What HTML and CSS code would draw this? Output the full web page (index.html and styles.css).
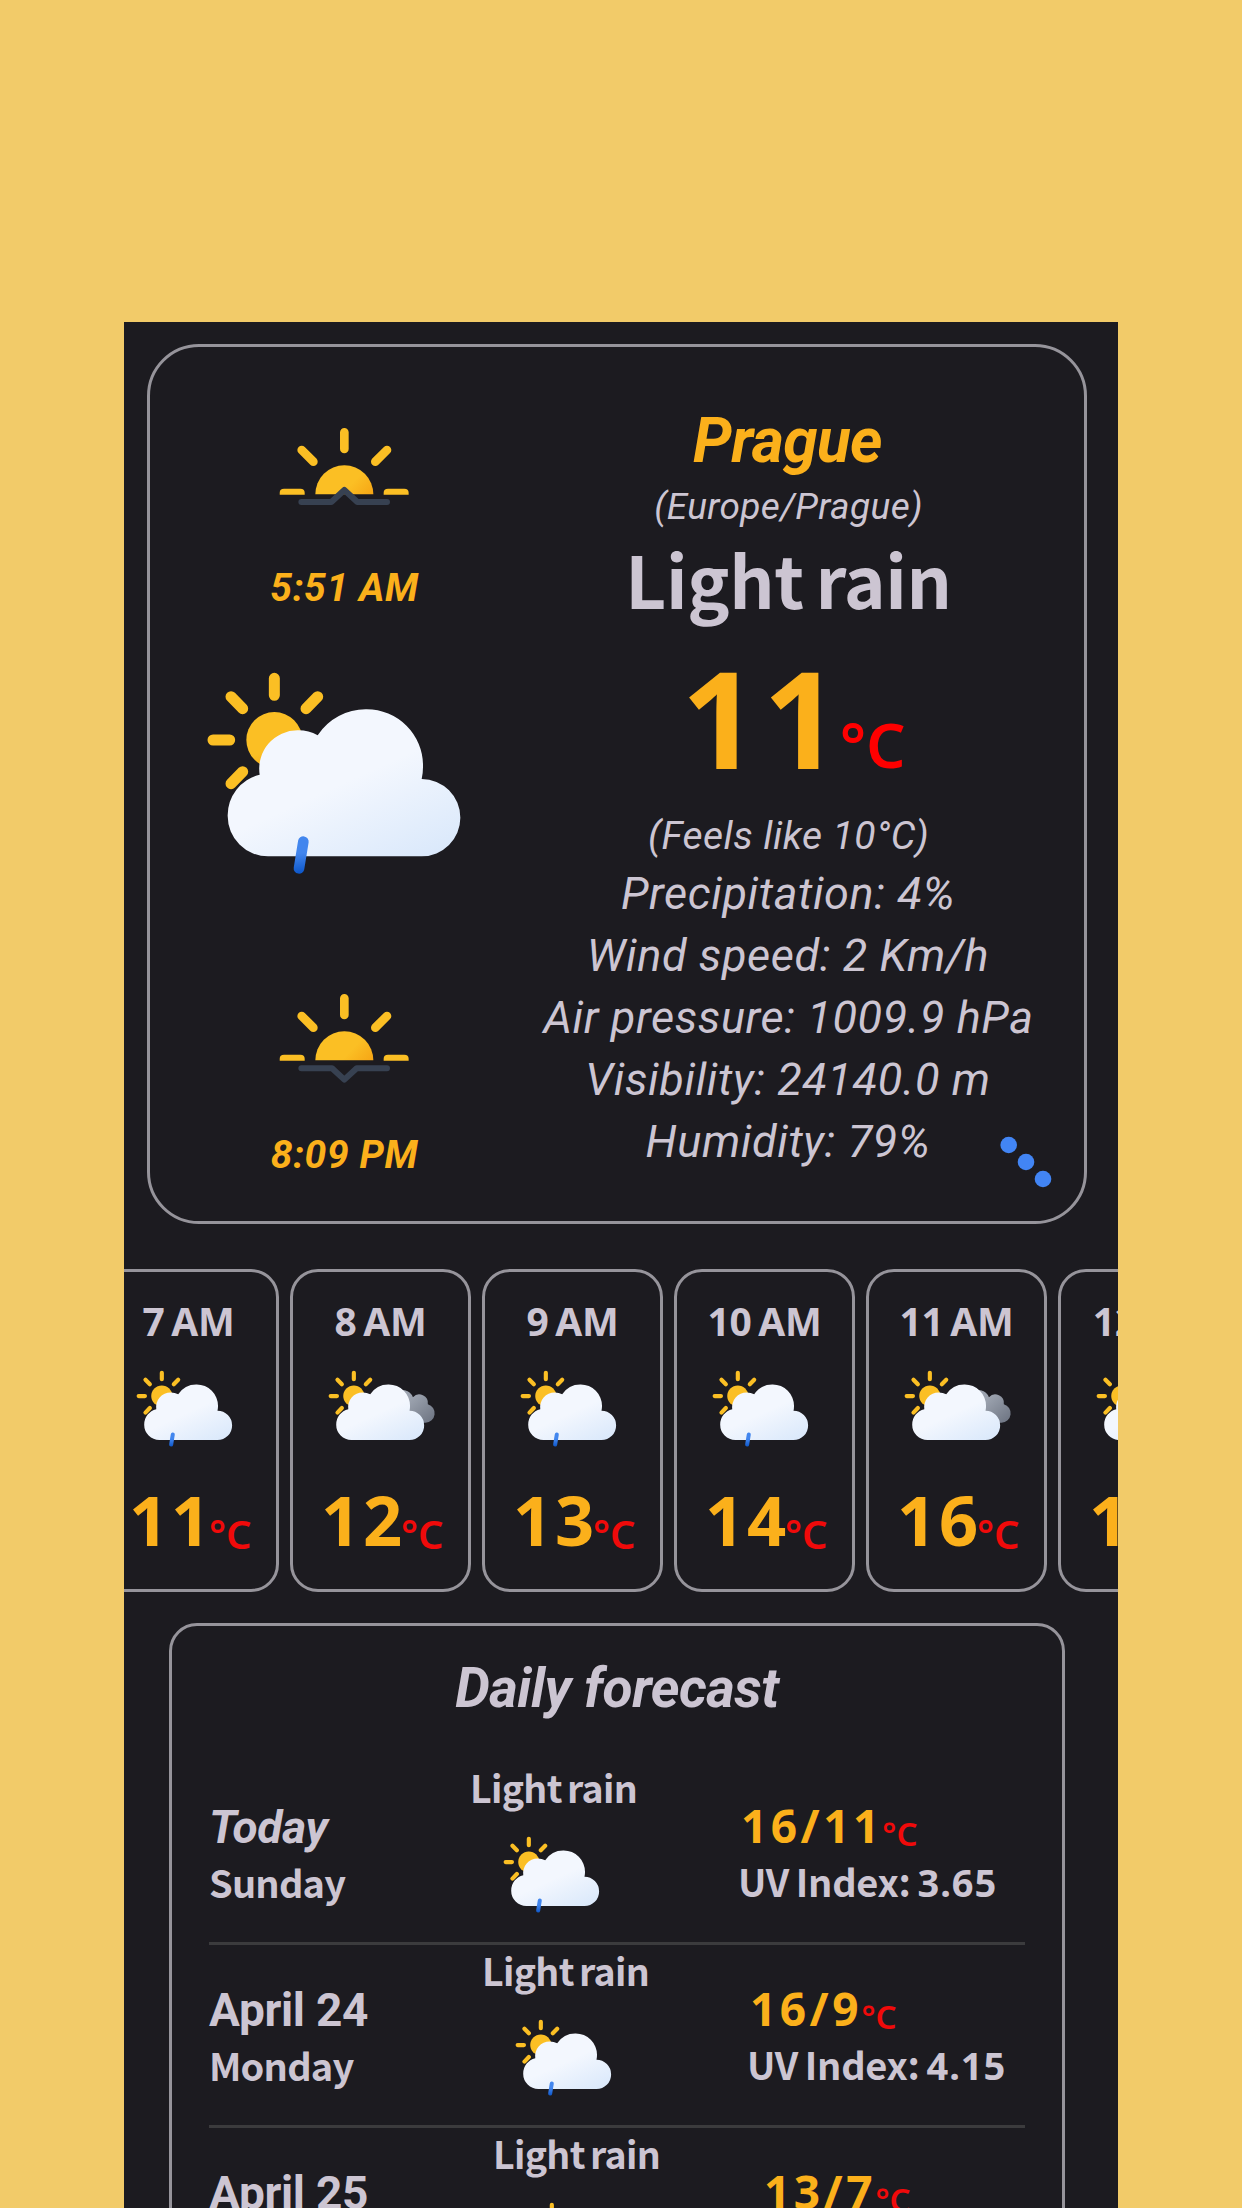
FILE: index.html
```html
<!DOCTYPE html>
<html lang="en">
<head>
<meta charset="utf-8">
<title>Weather</title>
<link rel="stylesheet" href="styles.css">
</head>
<body>
<svg class="defs" width="0" height="0" aria-hidden="true">
  <defs>
    <linearGradient id="sunFill" x1="0.2" y1="0" x2="0.8" y2="1"><stop offset="0.55" stop-color="#fbbf24"/><stop offset="1" stop-color="#f59e0b"/></linearGradient>
    <linearGradient id="halfSunFill" gradientUnits="userSpaceOnUse" x1="680" y1="460" x2="755" y2="530"><stop offset="0.3" stop-color="#fbbf24"/><stop offset="1" stop-color="#f6a414"/></linearGradient>
    <linearGradient id="cloudFill" x1="0.2" y1="0.1" x2="0.85" y2="1"><stop offset="0.45" stop-color="#f3f7fe"/><stop offset="1" stop-color="#dbe9fb"/></linearGradient>
    <linearGradient id="greyFill" x1="0" y1="0" x2="1" y2="1"><stop offset="0.3" stop-color="#9ca3af"/><stop offset="1" stop-color="#6b7280"/></linearGradient>
    <linearGradient id="dropFill" gradientUnits="userSpaceOnUse" x1="360" y1="591" x2="372" y2="703"><stop offset="0.45" stop-color="#4286ee"/><stop offset="1" stop-color="#0b55c8"/></linearGradient>
    <g id="cloudSun">
      <circle cx="285" cy="302" r="84" fill="url(#sunFill)"/>
      <path d="M285 117v51M155 172l35 36M415 172l-35 36M101 302h50M155 433l35-36" fill="none" stroke="#fbbf24" stroke-width="33" stroke-linecap="round"/>
    </g>
    <path id="cloud" d="M266 651A121 121 0 0 1 145 530A125 125 0 0 1 241 406A115 115 0 0 1 356 273A118 118 0 0 1 415 288A172 172 0 0 1 562 210A169 169 0 0 1 731 379A170 170 0 0 1 727 419A116 116 0 0 1 727 651Z" fill="url(#cloudFill)"/>
    <symbol id="rain" viewBox="80 95 770 615">
      <use href="#cloudSun"/><use href="#cloud"/>
      <path d="M372 607L359 687" fill="none" stroke="url(#dropFill)" stroke-width="32" stroke-linecap="round"/>
    </symbol>
    <symbol id="overcast" viewBox="80 95 860 615">
      <use href="#cloudSun"/>
      <path d="M640 513V256H690A89 89 0 0 1 754 312A68 68 0 0 1 872 366A75 75 0 0 1 854 513Z" fill="url(#greyFill)"/>
      <use href="#cloud"/>
    </symbol>
    <symbol id="halfSun" viewBox="478 318 392 277">
      <path d="M587 520A87 87 0 0 1 761 520Z" fill="url(#halfSunFill)"/>
      <path d="M480 521v-6q0-12 13-12h49q13 0 13 12v6zM792 521v-6q0-12 13-12h49q13 0 13 12v6z" fill="#fbbf24"/>
      <path d="M674 334v50M546 387l35 35M802 387l-35 35" fill="none" stroke="#fbbf24" stroke-width="26" stroke-linecap="round"/>
    </symbol>
  </defs>
</svg>
<main class="screen">
  <section class="now">
    <div class="sky">
      <svg class="horizon" viewBox="478 318 392 277"><use href="#halfSun" x="478" y="318" width="392" height="277"/><path class="ridge" d="M545 543h90l39-36 39 36h89"/></svg>
      <p class="clock">5:51 AM</p>
      <svg class="now-icon"><use href="#rain"/></svg>
      <svg class="horizon" viewBox="478 318 392 277"><use href="#halfSun" x="478" y="318" width="392" height="277"/><path class="ridge" d="M545 544h92l37 34 37-34h91"/></svg>
      <p class="clock">8:09 PM</p>
    </div>
    <div class="facts">
      <h1 class="city">Prague</h1>
      <p class="zone">(Europe/Prague)</p>
      <p class="summary">Light rain</p>
      <p class="now-temp"><span class="deg">11</span><span class="unit">°C</span></p>
      <p class="feels">(Feels like 10°C)</p>
      <ul class="stats">
        <li>Precipitation: 4%</li>
        <li>Wind speed: 2 Km/h</li>
        <li>Air pressure: 1009.9 hPa</li>
        <li>Visibility: 24140.0 m</li>
        <li>Humidity: 79%</li>
      </ul>
    </div>
    <svg class="more" viewBox="0 0 52 52"><circle cx="8.7" cy="9" r="8.3"/><circle cx="26" cy="26" r="8.3"/><circle cx="43" cy="43" r="8.3"/></svg>
  </section>

  <section class="hours">
    <article class="hour"><p class="time">7 AM</p><svg class="small-icon"><use href="#rain"/></svg><p class="hour-temp"><span class="deg">11</span><span class="unit">°C</span></p></article>
    <article class="hour"><p class="time">8 AM</p><svg class="small-icon wide"><use href="#overcast"/></svg><p class="hour-temp"><span class="deg">12</span><span class="unit">°C</span></p></article>
    <article class="hour"><p class="time">9 AM</p><svg class="small-icon"><use href="#rain"/></svg><p class="hour-temp"><span class="deg">13</span><span class="unit">°C</span></p></article>
    <article class="hour"><p class="time">10 AM</p><svg class="small-icon"><use href="#rain"/></svg><p class="hour-temp"><span class="deg">14</span><span class="unit">°C</span></p></article>
    <article class="hour"><p class="time">11 AM</p><svg class="small-icon wide"><use href="#overcast"/></svg><p class="hour-temp"><span class="deg">16</span><span class="unit">°C</span></p></article>
    <article class="hour"><p class="time">12 PM</p><svg class="small-icon"><use href="#rain"/></svg><p class="hour-temp"><span class="deg">17</span><span class="unit">°C</span></p></article>
  </section>

  <section class="daily">
    <h2 class="daily-title">Daily forecast</h2>
    <div class="day today">
      <div class="date"><p class="name">Today</p><p class="weekday">Sunday</p></div>
      <div class="cond"><p>Light rain</p><svg class="small-icon"><use href="#rain"/></svg></div>
      <div class="range"><p class="day-temp"><span class="deg">16/11</span><span class="unit">°C</span></p><p class="uv"><span class="uv-label">UV Index:</span> <span class="num">3.65</span></p></div>
    </div>
    <div class="day second">
      <div class="date"><p class="name">April 24</p><p class="weekday">Monday</p></div>
      <div class="cond"><p>Light rain</p><svg class="small-icon"><use href="#rain"/></svg></div>
      <div class="range"><p class="day-temp"><span class="deg">16/9</span><span class="unit">°C</span></p><p class="uv"><span class="uv-label">UV Index:</span> <span class="num">4.15</span></p></div>
    </div>
    <div class="day third">
      <div class="date"><p class="name">April 25</p></div>
      <div class="cond"><p>Light rain</p><svg class="small-icon"><use href="#rain"/></svg></div>
      <div class="range"><p class="day-temp"><span class="deg">13/7</span><span class="unit">°C</span></p></div>
    </div>
  </section>
</main>
</body>
</html>
```
FILE: styles.css
```css
* { box-sizing: border-box; margin: 0; padding: 0; }

body {
  width: 1242px;
  height: 2208px;
  overflow: hidden;
  background: #f2cb69;
  color: #ccc5d2;
  font-family: "Noto Sans", sans-serif;
  white-space: nowrap;
}

svg { display: block; }
.defs { position: absolute; }

.screen {
  width: 994px;
  height: 1886px;
  margin: 322px auto 0;
  padding-top: 21.5px;
  overflow: hidden;
  background: #1c1b20;
}

/* Current conditions */
.now {
  position: relative;
  display: grid;
  grid-template-columns: 390px 490px;
  column-gap: 3px;
  width: 940.5px;
  height: 880px;
  margin-left: 22.5px;
  border: 3px solid #96949b;
  border-radius: 52px;
}

.sky { display: flex; flex-direction: column; align-items: center; padding-top: 80px; }
.horizon { width: 130.7px; height: 92.3px; }
.ridge { fill: none; stroke: #374151; stroke-width: 18; stroke-linecap: round; stroke-linejoin: round; }
.clock {
  margin-top: 46.4px;
  font: italic 700 39px/46px Roboto, sans-serif;
  letter-spacing: 0.6px;
  color: #fbb01b;
}
.now-icon { width: 256.7px; height: 205px; margin: 60px 20px 116.8px 0; }

.facts { padding-top: 58px; text-align: center; }
.city { font: italic 700 62px/72px Roboto, sans-serif; letter-spacing: -0.6px; color: #fbb01b; }
.zone { margin-top: 8px; padding-left: 2px; font: italic 400 37px/44px Roboto, sans-serif; letter-spacing: 0.35px; }
.summary { margin-top: 7px; padding-left: 2px; font: 700 71px/84px "Noto Sans CJK SC", sans-serif; letter-spacing: -0.4px; word-spacing: -4px; }
.now-temp { margin: 22.5px 0 0 12px; font-size: 134px; font-weight: 660; line-height: 150px; }
.deg { color: #fbb01b; letter-spacing: 0.04em; }
.unit { color: #f00a0a; font-weight: 600; line-height: 1; }
.now-temp .deg { letter-spacing: 5px; }
.now-temp .unit { margin-left: -5px; font-size: 62px; vertical-align: 1.5px; color: #ff0000; }
.feels { margin-top: 20.5px; padding-left: 2px; font: italic 400 39px/46px Roboto, sans-serif; letter-spacing: 0.5px; }
.stats { margin-top: 4px; padding-left: 1px; list-style: none; font: italic 400 45px/62px Roboto, sans-serif; letter-spacing: 0.6px; }

.more { position: absolute; left: 850.5px; top: 789.5px; width: 52px; height: 52px; fill: #4285f4; }

/* Hourly strip */
.hours { display: flex; gap: 11px; margin: 45px 0 0 -26.5px; }
.hour {
  flex: 0 0 181px;
  height: 323px;
  padding-top: 26px;
  border: 3px solid #96949b;
  border-radius: 28px;
}
.time { padding-left: 1px; font-size: 39px; font-weight: 660; line-height: 46px; text-align: center; letter-spacing: -0.3px; word-spacing: -3px; }
.small-icon { width: 97px; height: 77.5px; }
.small-icon.wide { width: 108.4px; }
.hour .small-icon { margin: 26px 0 0 35.5px; }
.hour-temp { margin: 33px 0 0 28.5px; font-size: 68.6px; font-weight: 660; line-height: 80px; }
.hour-temp .unit { margin-left: -4px; font-size: 40px; vertical-align: -2.5px; }

/* Daily forecast */
.daily {
  width: 896px;
  height: 760px;
  margin: 31px 0 0 45px;
  padding: 30px 37px 0;
  border: 3px solid #96949b;
  border-radius: 28px;
}
.daily-title {
  margin-bottom: 42px;
  font: italic 700 55px/64px Roboto, sans-serif;
  letter-spacing: -0.5px;
  text-align: center;
}
.day { display: grid; height: 183px; border-bottom: 3px solid #3b3b3d; }
.today { grid-template-columns: 261px 267px auto; }
.second { grid-template-columns: 273px 264px auto; }
.third { grid-template-columns: 284px 267px auto; }

.date { padding-top: 38px; }
.name { font: 700 46px/54px Roboto, sans-serif; letter-spacing: -0.3px; }
.today .name { font-style: italic; }
.weekday { margin-top: 1px; font: 700 38px/54px "Noto Sans CJK SC", sans-serif; letter-spacing: -0.8px; }

.cond { padding-top: 1px; }
.cond p { font: 700 37.5px/48px "Noto Sans CJK SC", sans-serif; letter-spacing: -0.7px; word-spacing: -2.5px; }
.cond .small-icon { margin: 25px 0 0 33px; }

.range { padding-top: 36px; }
.day-temp { padding-left: 4px; font-size: 46px; font-weight: 660; line-height: 54px; }
.day-temp .deg { letter-spacing: 3.5px; }
.day-temp .unit { margin-left: -0.5px; font-size: 33px; vertical-align: -3px; }
.uv { padding-left: 1px; margin-top: 2px; font: 700 38px/54px "Noto Sans CJK SC", sans-serif; letter-spacing: -0.3px; word-spacing: -1.5px; }
.num { font-family: "Noto Sans", sans-serif; font-weight: 660; letter-spacing: 1px; }
```
